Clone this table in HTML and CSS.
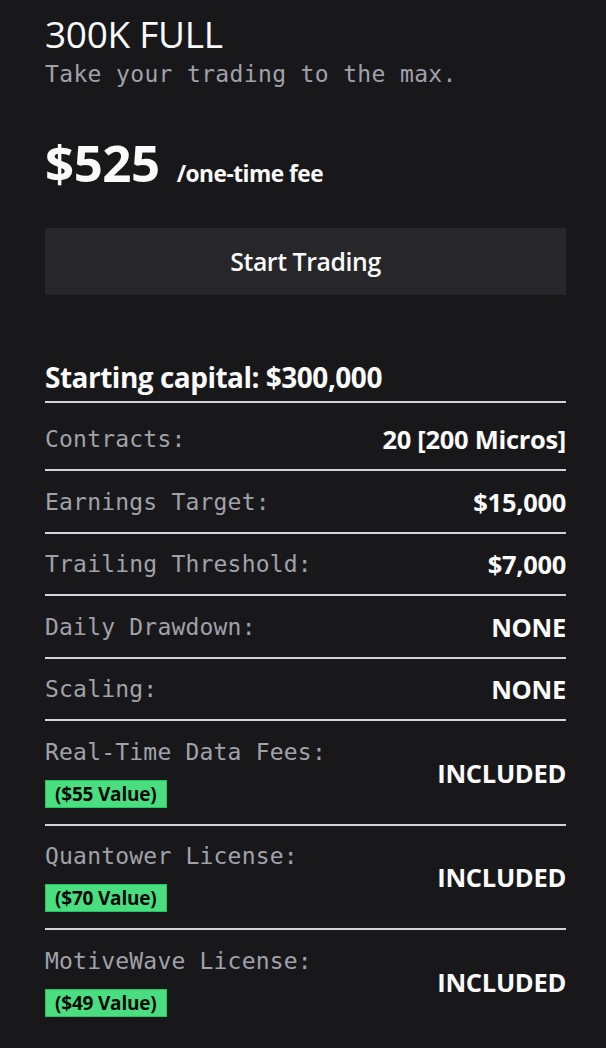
FILE: index.html
```html
<!DOCTYPE html>
<html>
<head>
<meta charset="utf-8">
<link rel="stylesheet" href="styles.css">
</head>
<body>
<div class="card">
  <h1 class="title">300K FULL</h1>
  <p class="tagline">Take your trading to the max.</p>
  <div class="price"><span class="amount">$525</span><span class="per">/one-time fee</span></div>
  <button class="cta">Start Trading</button>
  <div class="capital">Starting capital: $300,000</div>
  <ul class="specs">
    <li class="row first"><span class="label">Contracts:</span><span class="value">20 [200 Micros]</span></li>
    <li class="row"><span class="label">Earnings Target:</span><span class="value">$15,000</span></li>
    <li class="row"><span class="label">Trailing Threshold:</span><span class="value">$7,000</span></li>
    <li class="row"><span class="label">Daily Drawdown:</span><span class="value">NONE</span></li>
    <li class="row"><span class="label">Scaling:</span><span class="value">NONE</span></li>
    <li class="row"><div class="left"><span class="label">Real-Time Data Fees:</span><span class="badge">($55 Value)</span></div><span class="value">INCLUDED</span></li>
    <li class="row"><div class="left"><span class="label">Quantower License:</span><span class="badge">($70 Value)</span></div><span class="value">INCLUDED</span></li>
    <li class="row last"><div class="left"><span class="label">MotiveWave License:</span><span class="badge">($49 Value)</span></div><span class="value">INCLUDED</span></li>
  </ul>
</div>
</body>
</html>
```
FILE: styles.css
```css
html, body {
  margin: 0;
  padding: 0;
  background: #18181b;
}
body {
  font-family: "Open Sans", "Noto Sans", sans-serif;
  color: #fafafa;
}
.card {
  padding: 12px 40px 0 45px;
}
.title {
  margin: 0;
  font-size: 37px;
  font-weight: 400;
  line-height: 43px;
  letter-spacing: -0.3px;
}
.tagline {
  margin: 5px 0 0;
  font-family: "DejaVu Sans Mono", monospace;
  font-size: 23px;
  letter-spacing: 0.35px;
  line-height: 28px;
  color: #a1a1aa;
}
.price {
  margin-top: 44px;
  display: flex;
  align-items: baseline;
  gap: 17px;
  line-height: 60px;
}
.amount {
  font-size: 51px;
  font-weight: 700;
  letter-spacing: -0.5px;
}
.per {
  font-size: 22.7px;
  font-weight: 700;
  letter-spacing: -0.5px;
}
.cta {
  display: block;
  width: 100%;
  margin-top: 24px;
  height: 67px;
  border: 0;
  border-bottom: 1px solid #1f2433;
  background: #27272a;
  color: #fafafa;
  font-family: "Open Sans", sans-serif;
  font-size: 24.8px;
  font-weight: 600;
  letter-spacing: -0.4px;
  padding: 0;
}
.capital {
  margin-top: 64px;
  font-size: 28px;
  font-weight: 700;
  letter-spacing: -0.5px;
  line-height: 36px;
  padding-bottom: 6px;
  border-bottom: 2px solid #d4d4d8;
}
.specs {
  list-style: none;
  margin: 0;
  padding: 0;
}
.row {
  display: flex;
  justify-content: space-between;
  align-items: center;
  padding: 16.5px 0 16px;
  border-bottom: 2px solid #d4d4d8;
}
.row.first {
  padding-top: 22px;
  padding-bottom: 16px;
}
.row.last {
  border-bottom: 0;
}
.left {
  display: flex;
  flex-direction: column;
  align-items: flex-start;
  gap: 14px;
}
.label {
  font-family: "DejaVu Sans Mono", monospace;
  font-size: 23px;
  letter-spacing: 0.2px;
  line-height: 28px;
  color: #a1a1aa;
}
.value {
  font-size: 25.5px;
  font-weight: 700;
  letter-spacing: -0.3px;
  line-height: 28px;
}
.badge {
  display: inline-block;
  background: #4ade80;
  border: 1px solid #22c55e;
  color: #0a0a0a;
  font-size: 19px;
  font-weight: 700;
  letter-spacing: -0.2px;
  line-height: 26px;
  padding: 0 9px;
}
```
